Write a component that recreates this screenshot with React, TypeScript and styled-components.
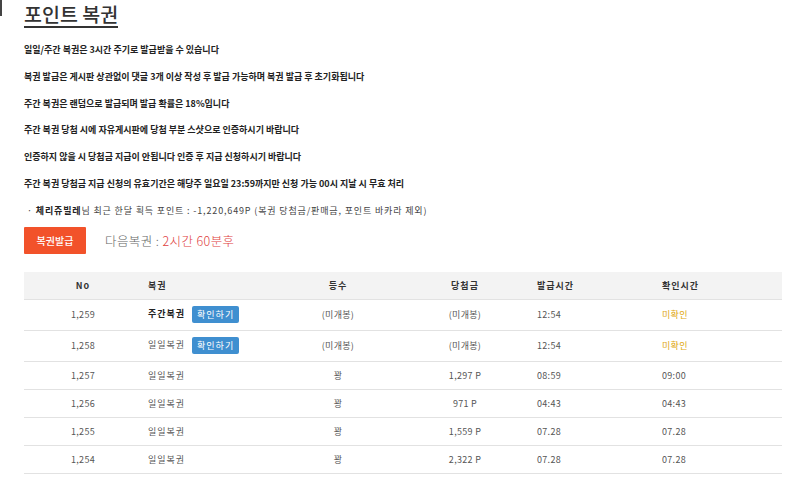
import React from 'react';
import styled, { createGlobalStyle } from 'styled-components';

const GlobalStyle = createGlobalStyle`
  html, body {
    margin: 0;
    padding: 0;
    background: #fff;
  }
  body {
    font-family: "Noto Sans CJK KR", "Noto Sans", sans-serif;
    color: #333;
  }
`;

const Page = styled.div`
  position: relative;
  width: 800px;
  height: 485px;
  overflow: hidden;
  padding: 2px 0 0 24px;
  box-sizing: border-box;
`;

const EdgeMark = styled.div`
  position: absolute;
  left: 0;
  top: 0;
  width: 2px;
  height: 16px;
  background: #444;
`;

const Title = styled.h2`
  display: inline-block;
  margin: 0;
  font-size: 19.5px;
  line-height: 24px;
  font-weight: 500;
  color: #333;
  border-bottom: 2px solid #333;
`;

const Notices = styled.div`
  display: flex;
  flex-direction: column;
  gap: 14.8px;
  margin-top: 16px;
`;

const Notice = styled.p`
  margin: 0;
  font-size: 9px;
  line-height: 12px;
  font-weight: 700;
  color: #222;
`;

const MemberLine = styled.p`
  margin: 15px 0 0;
  font-size: 9px;
  line-height: 12px;
  color: #444;
  letter-spacing: 0.85px;
  padding-left: 3px;

  b {
    font-weight: 700;
    color: #222;
  }
`;

const ActionRow = styled.div`
  display: flex;
  align-items: center;
  gap: 19px;
  margin-top: 10px;
`;

const IssueButton = styled.button`
  width: 62px;
  height: 27px;
  border: none;
  border-radius: 1px;
  background: #f2522a;
  color: #fff;
  font-family: inherit;
  font-size: 10px;
  font-weight: 500;
  padding: 0;
  cursor: pointer;
`;

const NextInfo = styled.span`
  font-size: 12.5px;
  letter-spacing: 0.4px;
  color: #666;
  font-weight: 300;
`;

const NextTime = styled.span`
  color: #e04040;
`;

const Table = styled.table`
  margin-top: 18px;
  width: 758px;
  border-collapse: collapse;
  table-layout: fixed;
`;

const Head = styled.th<{ $align?: string; $pad?: number }>`
  height: 27px;
  padding: 0 0 0 ${p => p.$pad ?? 0}px;
  background: #f3f3f3;
  border-bottom: 1px solid #e2e2e2;
  font-size: 9px;
  font-weight: 700;
  color: #333;
  letter-spacing: 1px;
  text-align: ${p => p.$align ?? 'center'};
`;

const Row = styled.tr<{ $tall?: boolean }>`
  height: ${p => (p.$tall ? 31 : 28)}px;
`;

const Cell = styled.td<{ $align?: string; $pad?: number; $tone?: string }>`
  padding: 0 0 0 ${p => p.$pad ?? 0}px;
  border-bottom: 1px solid #e2e2e2;
  font-size: 9px;
  letter-spacing: 0.3px;
  color: ${p => p.$tone ?? '#555'};
  text-align: ${p => p.$align ?? 'center'};
  white-space: nowrap;
`;

const Kind = styled.span<{ $bold?: boolean }>`
  letter-spacing: 1px;
  font-weight: ${p => (p.$bold ? 700 : 400)};
  color: ${p => (p.$bold ? '#222' : '#555')};
`;

const CheckButton = styled.button`
  margin-left: 7px;
  height: 17px;
  width: 47px;
  padding: 0;
  border: none;
  border-radius: 2px;
  background: #3f8fd0;
  color: #fff;
  font-family: inherit;
  font-size: 9px;
  letter-spacing: 1px;
  vertical-align: middle;
  cursor: pointer;
`;

const notices = [
  '일일/주간 복권은 3시간 주기로 발급받을 수 있습니다',
  '복권 발급은 게시판 상관없이 댓글 3개 이상 작성 후 발급 가능하며 복권 발급 후 초기화됩니다',
  '주간 복권은 랜덤으로 발급되며 발급 확률은 18%입니다',
  '주간 복권 당첨 시에 자유게시판에 당첨 부분 스샷으로 인증하시기 바랍니다',
  '인증하지 않을 시 당첨금 지급이 안됩니다 인증 후 지급 신청하시기 바랍니다',
  '주간 복권 당첨금 지급 신청의 유효기간은 해당주 일요일 23:59까지만 신청 가능 00시 지날 시 무효 처리',
];

type Ticket = {
  no: string;
  kind: string;
  weekly?: boolean;
  pending?: boolean;
  rank: string;
  prize: string;
  issued: string;
  checked: string;
};

const tickets: Ticket[] = [
  { no: '1,259', kind: '주간복권', weekly: true, pending: true, rank: '(미개봉)', prize: '(미개봉)', issued: '12:54', checked: '미확인' },
  { no: '1,258', kind: '일일복권', pending: true, rank: '(미개봉)', prize: '(미개봉)', issued: '12:54', checked: '미확인' },
  { no: '1,257', kind: '일일복권', rank: '꽝', prize: '1,297 P', issued: '08:59', checked: '09:00' },
  { no: '1,256', kind: '일일복권', rank: '꽝', prize: '971 P', issued: '04:43', checked: '04:43' },
  { no: '1,255', kind: '일일복권', rank: '꽝', prize: '1,559 P', issued: '07.28', checked: '07.28' },
  { no: '1,254', kind: '일일복권', rank: '꽝', prize: '2,322 P', issued: '07.28', checked: '07.28' },
];

const App: React.FC = () => {
  return (
    <>
      <GlobalStyle />
      <Page>
        <EdgeMark />
        <Title>포인트 복권</Title>
        <Notices>
          {notices.map(n => (
            <Notice key={n}>{n}</Notice>
          ))}
        </Notices>
        <MemberLine>
          · <b>체리쥬빌레</b>님 최근 한달 획득 포인트 : -1,220,649P (복권 당첨금/판매금, 포인트 바카라 제외)
        </MemberLine>
        <ActionRow>
          <IssueButton>복권발급</IssueButton>
          <NextInfo>
            다음복권 : <NextTime>2시간 60분후</NextTime>
          </NextInfo>
        </ActionRow>
        <Table>
          <colgroup>
            <col style={{ width: 118 }} />
            <col style={{ width: 138 }} />
            <col style={{ width: 116 }} />
            <col style={{ width: 138 }} />
            <col style={{ width: 125 }} />
            <col style={{ width: 123 }} />
          </colgroup>
          <thead>
            <tr>
              <Head>No</Head>
              <Head $align="left" $pad={6}>복권</Head>
              <Head>등수</Head>
              <Head>당첨금</Head>
              <Head $align="left" $pad={3}>발급시간</Head>
              <Head $align="left" $pad={3}>확인시간</Head>
            </tr>
          </thead>
          <tbody>
            {tickets.map(t => (
              <Row key={t.no} $tall={t.pending}>
                <Cell>{t.no}</Cell>
                <Cell $align="left" $pad={6}>
                  <Kind $bold={t.weekly}>{t.kind}</Kind>
                  {t.pending && <CheckButton>확인하기</CheckButton>}
                </Cell>
                <Cell>{t.rank}</Cell>
                <Cell>{t.prize}</Cell>
                <Cell $align="left" $pad={3}>{t.issued}</Cell>
                <Cell $align="left" $pad={3} $tone={t.pending ? '#e0a812' : undefined}>
                  {t.checked}
                </Cell>
              </Row>
            ))}
          </tbody>
        </Table>
      </Page>
    </>
  );
};

export default App;
